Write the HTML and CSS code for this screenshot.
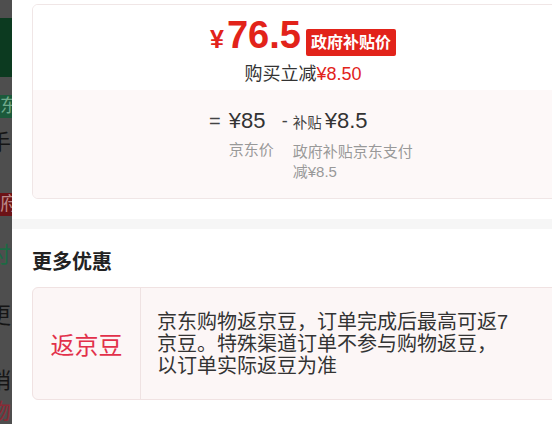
FILE: index.html
```html
<!DOCTYPE html>
<html lang="zh-CN">
<head>
<meta charset="utf-8">
<link rel="stylesheet" href="styles.css">
</head>
<body>
<div class="page">
  <div class="backdrop">
    <div class="bd-dkgreen"></div>
    <div class="bd-chip bd-green">东</div>
    <div class="bd-char bd-hand">手</div>
    <div class="bd-chip bd-red">府</div>
    <div class="bd-char bd-pay">付</div>
    <div class="bd-char bd-more">更</div>
    <div class="bd-char bd-sale">哨</div>
    <div class="bd-char bd-thing">物</div>
  </div>
  <div class="sheet">
    <section class="price-sec">
      <div class="price-card">
        <div class="pc-top">
          <div class="price-row">
            <span class="amount"><span class="yen">¥</span><span class="num">76.5</span></span>
            <span class="badge">政府补贴价</span>
          </div>
          <div class="reduce">购买立减<span class="red">¥8.50</span></div>
        </div>
        <div class="pc-bottom">
          <div class="formula">
            <span class="op op-eq">=</span>
            <div class="term">
              <div class="amt">¥85</div>
              <div class="lbl">京东价</div>
            </div>
            <span class="op op-minus">-</span>
            <div class="term">
              <div class="amt"><span class="sub">补贴</span>¥8.5</div>
              <div class="lbl">政府补贴京东支付<br>减¥8.5</div>
            </div>
          </div>
        </div>
      </div>
    </section>
    <div class="band"></div>
    <section class="more">
      <h2 class="more-title">更多优惠</h2>
      <div class="promo">
        <div class="tag">返京豆</div>
        <div class="desc">京东购物返京豆，订单完成后最高可返7京豆。特殊渠道订单不参与购物返豆，以订单实际返豆为准</div>
      </div>
    </section>
  </div>
</div>
</body>
</html>
```

FILE: styles.css
```css
html, body {
  margin: 0;
  padding: 0;
  overflow: hidden;
}
body {
  font-family: "Liberation Sans", "Noto Sans CJK SC", sans-serif;
  background: #fff;
}
.page {
  display: flex;
  height: 424px;
  overflow: hidden;
}

/* dimmed page behind the sheet */
.backdrop {
  width: 12px;
  flex: none;
  background: #4e4e4e;
  overflow: hidden;
  display: flex;
  flex-direction: column;
}
.bd-dkgreen {
  margin-top: 18px;
  height: 65px;
  background: #0c3a20;
}
.bd-chip {
  height: 23px;
  line-height: 23px;
  font-size: 18px;
  white-space: nowrap;
  margin-left: -8px;
  padding-left: 8px;
}
.bd-green {
  margin-top: 18px;
  background: #1b5a3b;
  color: #6fa88a;
}
.bd-red {
  margin-top: 38px;
  background: #6c1216;
  color: #b88;
}
.bd-char {
  height: 24px;
  line-height: 24px;
  font-size: 22px;
  margin-left: -11px;
  white-space: nowrap;
  color: #151515;
}
.bd-hand { margin-top: 13px; }
.bd-pay { margin-top: 27px; color: #1c6a44; }
.bd-more { margin-top: 37px; }
.bd-sale { margin-top: 41px; }
.bd-thing { margin-top: 7px; color: #8a2a35; }

.sheet {
  flex: 1;
  min-width: 0;
  background: #fff;
  overflow: hidden;
}

/* price card */
.price-sec {
  padding: 4px 0 20px 20px;
}
.price-card {
  width: 540px;
  border: 1px solid #f0e6e6;
  border-radius: 6px;
  overflow: hidden;
}
.pc-top {
  background: #fff;
  padding: 15px 0 4px;
  display: flex;
  flex-direction: column;
  align-items: center;
}
.price-row {
  display: flex;
  align-items: center;
  height: 38px;
}
.amount {
  color: #e2231a;
  font-weight: bold;
  line-height: 38px;
  white-space: nowrap;
}
.yen {
  font-size: 25px;
  margin-right: 3px;
}
.num {
  font-size: 38px;
}
.badge {
  margin-left: 5px;
  margin-top: 6px;
  height: 27px;
  line-height: 27px;
  padding: 0 5px;
  background: #e2231a;
  color: #fff;
  font-size: 16px;
  font-weight: bold;
  border-radius: 2px;
  white-space: nowrap;
}
.reduce {
  margin-top: 4px;
  font-size: 18px;
  line-height: 24px;
  color: #333;
}
.reduce .red {
  color: #e2231a;
}

.pc-bottom {
  background: #fdf8f8;
  padding: 16px 0 16px 176px;
}
.formula {
  display: flex;
  align-items: flex-start;
}
.op {
  line-height: 30px;
  color: #444;
}
.op-eq {
  font-size: 20px;
  margin-right: 8px;
}
.op-minus {
  font-size: 18px;
  margin: 0 5px 0 8px;
}
.amt {
  font-size: 22px;
  line-height: 30px;
  color: #333;
  white-space: nowrap;
}
.sub {
  font-size: 14.5px;
  margin-right: 3px;
  color: #444;
}
.lbl {
  margin-top: 4px;
  font-size: 15px;
  line-height: 20px;
  color: #999;
  white-space: nowrap;
}

.band {
  height: 10px;
  background: #f6f6f6;
}

/* more offers */
.more {
  padding: 19px 0 0 20px;
}
.more-title {
  margin: 0;
  font-size: 20px;
  line-height: 28px;
  font-weight: bold;
  color: #222;
}
.promo {
  margin-top: 11px;
  width: 540px;
  display: flex;
  border: 1px solid #f0e2e2;
  border-radius: 6px;
  background: #fcf6f6;
}
.tag {
  width: 107px;
  flex: none;
  display: flex;
  align-items: center;
  justify-content: center;
  border-right: 1px solid #efe2e2;
  color: #e2304a;
  font-size: 24px;
}
.desc {
  width: 356px;
  padding: 23px 0 22px 16px;
  font-size: 20px;
  line-height: 22px;
  color: #333;
}
```
